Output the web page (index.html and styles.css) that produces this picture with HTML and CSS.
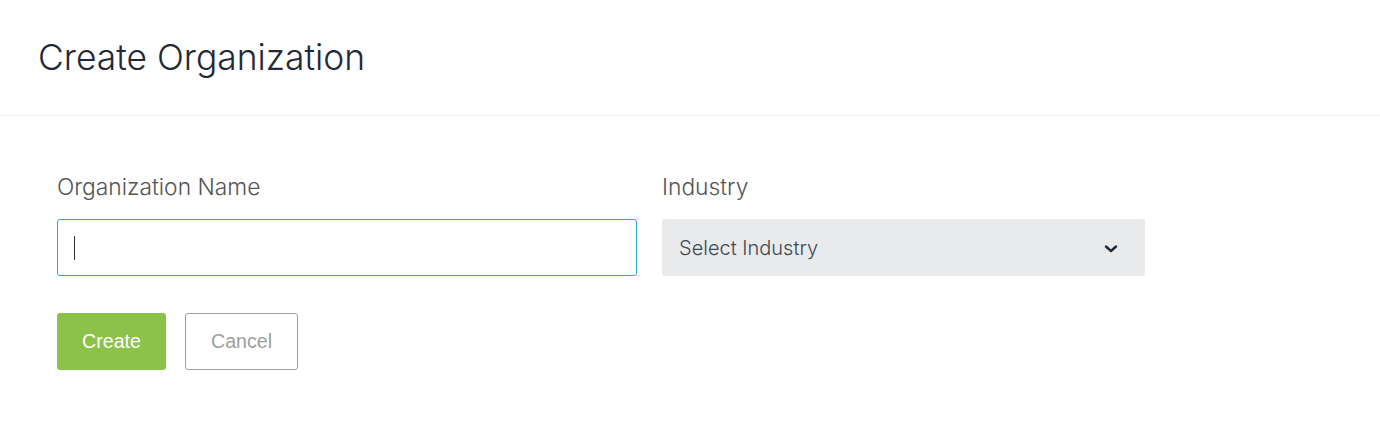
FILE: index.html
```html
<!DOCTYPE html>
<html>
<head>
<meta charset="utf-8">
<link rel="stylesheet" href="styles.css">
</head>
<body>
<div class="header">
  <h1 class="title">Create Organization</h1>
</div>
<div class="form">
  <div class="row">
    <div class="field field-name">
      <label class="label">Organization Name</label>
      <div class="input"><span class="caret"></span></div>
    </div>
    <div class="field field-industry">
      <label class="label">Industry</label>
      <div class="select">
        <span class="select-text">Select Industry</span>
        <svg class="chevron" width="14" height="10" viewBox="0 0 14 10"><path d="M2 2.5 L7 7 L12 2.5" fill="none" stroke="#1f2937" stroke-width="2.4" stroke-linecap="round" stroke-linejoin="round"/></svg>
      </div>
    </div>
  </div>
  <div class="actions">
    <button class="btn btn-create">Create</button>
    <button class="btn btn-cancel">Cancel</button>
  </div>
</div>
</body>
</html>
```
FILE: styles.css
```css
html, body { margin: 0; padding: 0; background: #fff; }
body { width: 1380px; height: 433px; overflow: hidden; font-family: Inter, "Liberation Sans", sans-serif; }
.header {
  height: 116px;
  border-bottom: 1px solid #f1f2f3;
  box-sizing: border-box;
  padding-left: 38px;
  display: flex;
  align-items: flex-start;
}
.title {
  margin: 35px 0 0 0;
  font-family: Inter, sans-serif;
  font-weight: 300;
  font-size: 35.4px;
  line-height: 46px;
  color: #1f2937;
}
.form { padding: 57px 0 0 57px; }
.row { display: flex; gap: 25px; }
.field { display: flex; flex-direction: column; }
.field-name { width: 580px; }
.field-industry { width: 483px; }
.label {
  font-family: Inter, sans-serif;
  font-weight: 300;
  font-size: 22.8px;
  line-height: 28px;
  color: #555;
  height: 46px;
}
.input {
  height: 57px;
  box-sizing: border-box;
  border: 1px solid #1eb3c6;
  border-radius: 3px;
  display: flex;
  align-items: center;
  padding-left: 16px;
}
.caret { width: 1px; height: 24px; background: #333; }
.select {
  height: 57px;
  box-sizing: border-box;
  background: #e9eaec;
  border-radius: 3px;
  display: flex;
  align-items: center;
  justify-content: space-between;
  padding: 0 27px 0 17px;
}
.select-text { font-family: Inter, sans-serif; font-weight: 300; font-size: 20px; color: #3f4752; }
.chevron { display: block; margin-top: 3px; }
.actions { display: flex; gap: 19px; margin-top: 37px; }
.btn {
  height: 57px;
  box-sizing: border-box;
  border-radius: 3px;
  font-family: "Liberation Sans", Arial, sans-serif;
  font-size: 19.6px;
  padding: 0;
}
.btn-create { width: 109px; background: #8bc34a; border: none; color: #fff; }
.btn-cancel { width: 113px; background: #fff; border: 1px solid #9e9e9e; color: #9e9e9e; height: 57px; }
```
